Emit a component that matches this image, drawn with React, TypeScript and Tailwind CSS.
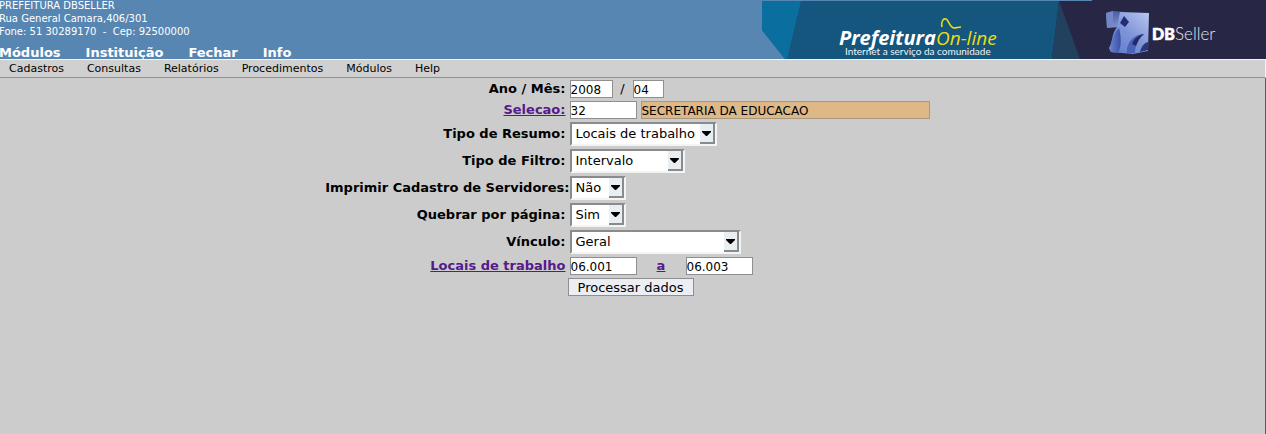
import React from "react";

const modules = ["Módulos", "Instituição", "Fechar", "Info"];
const menu = ["Cadastros", "Consultas", "Relatórios", "Procedimentos", "Módulos", "Help"];

const inputClass =
  "block h-[18px] rounded-none border border-[#8f8f8f] bg-white pt-0.5 text-[12px] leading-[14px] text-black outline-none";

function Banner() {
  return (
    <svg className="block h-[59px] w-[504px] shrink-0" viewBox="0 0 504 59" role="img" aria-label="Prefeitura On-line - DBSeller">
      <defs>
        <linearGradient id="face" x1="0.1" y1="1" x2="0.9" y2="0">
          <stop offset="0" stopColor="#5f7cca" />
          <stop offset="0.5" stopColor="#7f95d8" />
          <stop offset="1" stopColor="#b4c2ee" />
        </linearGradient>
        <linearGradient id="side" x1="0" y1="0" x2="0" y2="1">
          <stop offset="0" stopColor="#4c5da6" />
          <stop offset="1" stopColor="#7f92d0" />
        </linearGradient>
        <linearGradient id="leg" x1="0" y1="0" x2="1" y2="0">
          <stop offset="0" stopColor="#6f86d0" />
          <stop offset="1" stopColor="#3a50a7" />
        </linearGradient>
      </defs>
      <path d="M0 1H340V59H23L0 30Z" fill="#14567d" />
      <path d="M0 1H39L25 59H23L0 30Z" fill="#0a6f9f" />
      <path d="M297 1L290 59H504V0H330V1Z" fill="#272645" />
      <path d="M297 1L290 59H318Z" fill="#22415f" />
      <text x="77" y="45" fill="#fff" fontFamily="'Open Sans', sans-serif" fontSize="20" fontWeight="700" fontStyle="italic">Prefeitura</text>
      <text x="174" y="45" fill="#ecdc16" fontFamily="'Open Sans', sans-serif" fontSize="19" fontStyle="italic">On-line</text>
      <path d="M180 27C179 22 181 18 184 19C187 20 187 27 192 28C195 28 196 27 199 27" fill="none" stroke="#ecdc16" strokeWidth="1.6" />
      <text x="83" y="55" fill="#eef4f8" fontFamily="Lato, sans-serif" fontSize="10">Internet a serviço da comunidade</text>
      <path d="M344 13L351 11L363 12L357 27L345 28Z" fill="url(#side)" />
      <path d="M344 13L351 11V26L345 28Z" fill="#7486c6" />
      <path d="M358 12L387 13L386 51L371 54L349 52L347 48C351 42 349 35 355 27Z" fill="url(#face)" />
      <path d="M362 16L367 22L363 27L358 23Z" fill="#262b78" />
      <path d="M347 48C351 42 350 34 357 28C359 35 360 46 356 53L349 52Z" fill="url(#leg)" />
      <path d="M365 53C364 43 372 34 382 34C376 38 373 46 373 53Z" fill="#4a62b8" />
      <path d="M370 44C372 38 377 35 382 34C378 37 376 41 374 46Z" fill="#232a66" />
      <path d="M378 52C379 47 382 43 386 42V50Z" fill="#2b397b" />
      <text x="390" y="40" fill="#fff" stroke="#fff" strokeWidth="0.6" fontFamily="Lato, sans-serif" fontSize="16" fontWeight="900">DB</text>
      <text x="413" y="40" fill="#e3e5ee" fontFamily="Lato, sans-serif" fontSize="17" fontWeight="300">Seller</text>
    </svg>
  );
}

type SelectProps = { id: string; options: string[]; className: string };

function Select({ id, options, className }: SelectProps) {
  return (
    <div className={`relative h-6 ${className}`}>
      <select
        id={id}
        className="block h-6 w-full appearance-none rounded-none border-2 border-b-[#f4f4f4] border-l-[#8b8b8b] border-r-[#f4f4f4] border-t-[#8b8b8b] bg-white pl-1 text-[13px] leading-5 text-black outline-none"
      >
        {options.map((o) => (
          <option key={o}>{o}</option>
        ))}
      </select>
      <span className="pointer-events-none absolute bottom-0.5 right-0.5 top-0.5 flex w-[15px] items-center justify-center border-b-2 border-r-2 border-[#868b8d] bg-[#e9eef2]">
        <svg className="h-[5px] w-[9px]" viewBox="0 0 9 5" aria-hidden="true">
          <path d="M0 0H9V1L5 5H4L0 1Z" fill="#000" />
        </svg>
      </span>
    </div>
  );
}

type RowProps = { label: string; htmlFor: string; link?: boolean; flush?: boolean; children: React.ReactNode };

function Row({ label, htmlFor, link, flush, children }: RowProps) {
  return (
    <>
      <label
        htmlFor={htmlFor}
        className={`flex justify-end self-center whitespace-nowrap font-bold leading-4 ${flush ? "" : "pr-1"}`}
      >
        {link ? (
          <a href="#" className="text-[#551a8b] underline">
            {label}
          </a>
        ) : (
          label
        )}
      </label>
      <div className="flex items-center">{children}</div>
    </>
  );
}

export default function App() {
  return (
    <div className="flex min-h-screen flex-col overflow-hidden bg-[#ccc] font-['DejaVu_Sans',sans-serif] text-black">
      <header className="flex items-start justify-between overflow-hidden bg-[#5786b2] text-white">
        <div className="-ml-px h-[59px]">
          <address className="-mt-px text-[10px] not-italic leading-[13px]">
            <p>PREFEITURA DBSELLER</p>
            <p>Rua General Camara,406/301</p>
            <p className="whitespace-pre">Fone: 51 30289170  -  Cep: 92500000</p>
          </address>
          <nav className="mt-1.5 flex gap-[25px] text-[13px] font-bold leading-[18px]">
            {modules.map((m) => (
              <a key={m} href="#">
                {m}
              </a>
            ))}
          </nav>
        </div>
        <Banner />
      </header>

      <nav className="flex h-[19px] gap-[23px] border-b border-r border-t border-b-[#8f8f8f] border-r-[#f4f4f4] border-t-[#f4f4f4] bg-[#d0d0d0] pl-[9px] text-[11px] leading-[17px]">
        {menu.map((m) => (
          <a key={m} href="#">
            {m}
          </a>
        ))}
      </nav>

      <form className="flex-1 border-r border-[#35618f] pt-0.5 text-[13px]" onSubmit={(e) => e.preventDefault()}>
        <div className="grid grid-cols-[234px_360px] justify-center gap-y-[3px]">
          <Row label="Ano / Mês:" htmlFor="ano">
            <input id="ano" defaultValue="2008" className={`${inputClass} w-[43px]`} />
            <span className="w-5 text-center leading-4">/</span>
            <input aria-label="Mês" defaultValue="04" className={`${inputClass} w-[31px]`} />
          </Row>
          <Row label="Selecao:" htmlFor="selecao" link>
            <input id="selecao" defaultValue="32" className={`${inputClass} w-[67px]`} />
            <input
              aria-label="Descrição da seleção"
              readOnly
              defaultValue="SECRETARIA DA EDUCACAO"
              className="ml-1 block h-[18px] w-[289px] rounded-none border border-[#a89880] bg-[#deb887] pt-0.5 text-[12px] leading-[14px] outline-none"
            />
          </Row>
          <Row label="Tipo de Resumo:" htmlFor="resumo">
            <Select id="resumo" options={["Locais de trabalho"]} className="w-[147px]" />
          </Row>
          <Row label="Tipo de Filtro:" htmlFor="filtro">
            <Select id="filtro" options={["Intervalo"]} className="w-[115px]" />
          </Row>
          <Row label="Imprimir Cadastro de Servidores:" htmlFor="imprimir" flush>
            <Select id="imprimir" options={["Não", "Sim"]} className="w-14" />
          </Row>
          <Row label="Quebrar por página:" htmlFor="quebrar">
            <Select id="quebrar" options={["Sim", "Não"]} className="w-14" />
          </Row>
          <Row label="Vínculo:" htmlFor="vinculo">
            <Select id="vinculo" options={["Geral"]} className="w-[171px]" />
          </Row>
          <Row label="Locais de trabalho" htmlFor="local-inicial" link>
            <input id="local-inicial" defaultValue="06.001" className={`${inputClass} w-[67px]`} />
            <a href="#" className="w-[49px] text-center font-bold leading-4 text-[#551a8b] underline">
              a
            </a>
            <input aria-label="Local de trabalho final" defaultValue="06.003" className={`${inputClass} w-[67px]`} />
          </Row>
        </div>
        <div className="mt-[3px] flex justify-center pr-1">
          <button type="submit" className="h-[18px] w-[126px] border border-[#8f8f8f] bg-[#ebeef2] pt-px text-[13px] leading-4">
            Processar dados
          </button>
        </div>
      </form>
    </div>
  );
}
